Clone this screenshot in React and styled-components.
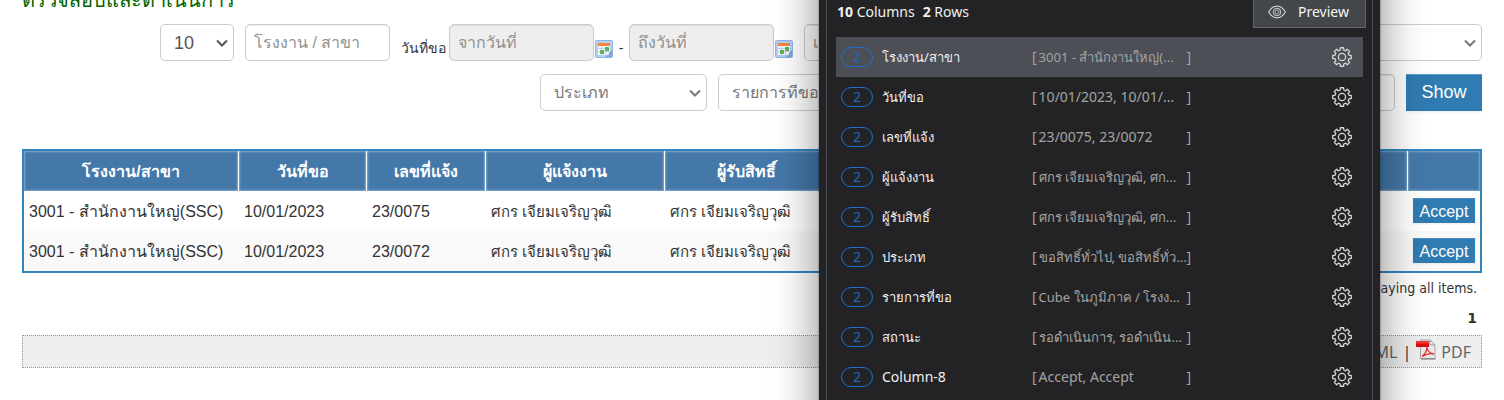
import React from "react";
import styled, { createGlobalStyle, css } from "styled-components";

const GlobalStyle = createGlobalStyle`
  * { box-sizing: border-box; }
  html, body { margin: 0; padding: 0; background: #fff; overflow-x: hidden; }
  body { font-family: "Liberation Sans", Arial, sans-serif; color: #333; }
  button, input, select { font-family: inherit; }
`;

const Page = styled.main`
  padding: 0 22px 32px;
`;

const Title = styled.h1`
  margin: -14px 0 10px;
  height: 28px;
  font-size: 20px;
  line-height: 28px;
  font-weight: 400;
  color: #006400;
`;

const FilterRow = styled.div`
  display: flex;
  justify-content: flex-end;
  gap: 11px;
  height: 37px;
  margin-bottom: 13px;
  padding-left: ${(p) => p.$indent}px;
`;

const field = css`
  height: 37px;
  border: 1px solid #ccc;
  border-radius: 5px;
  font-size: ${(p) => (p.$numeric ? 18 : 16)}px;
  color: #666;
  background-color: #fff;
  width: ${(p) => (p.$w ? `${p.$w}px` : "auto")};
  flex: ${(p) => (p.$grow ? "1 1 0" : "0 0 auto")};
  min-width: 0;
`;

const TextField = styled.input`
  ${field}
  padding: 0 8px;
  box-shadow: inset 0 1px 1px rgba(0, 0, 0, 0.08);
  &::placeholder { color: #909090; opacity: 1; }
  &:disabled { background-color: #eee; }
`;

const SelectWrap = styled.span`
  position: relative;
  display: flex;
  width: ${(p) => (p.$w ? `${p.$w}px` : "auto")};
  flex: ${(p) => (p.$grow ? "1 1 0" : "0 0 auto")};
  color: ${(p) => p.$tone || "#777"};
  svg {
    position: absolute;
    right: 6px;
    top: 13px;
    pointer-events: none;
  }
`;

const SelectField = styled.select`
  ${field}
  width: 100%;
  appearance: none;
  padding: 0 20px 0 13px;
  color: inherit;
`;

const DateGroup = styled.div`
  display: flex;
  align-items: flex-end;
  font-size: 14px;
`;

const DateLabel = styled.label`
  width: 48px;
  line-height: 20px;
  padding-bottom: 3px;
  white-space: nowrap;
`;

const Dash = styled.span`
  width: 16px;
  text-align: center;
  line-height: 20px;
  padding-bottom: 3px;
`;

const IconButton = styled.button`
  display: flex;
  padding: 0;
  border: 0;
  background: none;
  color: inherit;
  cursor: pointer;
`;

const CalendarButton = styled(IconButton)`
  margin: 0 0 3px 1px;
`;

const ShowButton = styled.button`
  width: 76px;
  height: 37px;
  border: 0;
  padding: 0;
  background: #307bb1;
  color: #fff;
  font-size: 18px;
  box-shadow: inset 0 2px 0 -1px #5c9ac6, 0 1px 2px rgba(0, 0, 0, 0.08);
`;

const Grid = styled.table`
  width: 100%;
  margin-top: 38px;
  table-layout: fixed;
  border-collapse: separate;
  border-spacing: 0;
  border: 2px solid #3385bf;
  font-size: 16px;
`;

const HeadCell = styled.th`
  height: 40px;
  padding: 2px 4px 0;
  background: #4478a9;
  color: #fff;
  font-size: 16px;
  line-height: 24px;
  border-right: 1px solid #fff;
  box-shadow: inset 0 0 2px 1px #82a7c8;
  white-space: nowrap;
  &:last-child { border-right: 0; }
`;

const Row = styled.tr`
  background: ${(p) => (p.$alt ? "#f9f9f9" : "#fff")};
`;

const Cell = styled.td`
  height: 40px;
  padding: 2px 5px 0;
  line-height: 24px;
  white-space: nowrap;
  overflow: hidden;
`;

const PersonCell = styled(Cell)`
  font-size: 15px;
`;

const ActionCell = styled(Cell)`
  padding: 0 5px 1px;
`;

const AcceptButton = styled.button`
  display: block;
  width: 62px;
  height: 25px;
  border: 0;
  padding: 2px 0 0;
  background: #307bb1;
  color: #fff;
  font-size: 16px;
  box-shadow: inset 0 2px 0 -1px #4a8dbd, 0 1px 2px rgba(0, 0, 0, 0.08);
`;

const Summary = styled.p`
  margin: 0;
  padding: 5px 5px 0;
  text-align: right;
  font-family: "DejaVu Sans Condensed", "DejaVu Sans", sans-serif;
  font-size: 14px;
  line-height: 20px;
`;

const Pager = styled.nav`
  padding: 10px 5px 0;
  text-align: right;
  font-family: "DejaVu Sans", sans-serif;
  font-size: 14px;
  line-height: 20px;
  font-weight: 700;
`;

const ExportBar = styled.div`
  display: flex;
  justify-content: flex-end;
  align-items: center;
  gap: 5px;
  height: 33px;
  margin-top: 7px;
  padding-right: 10px;
  border: 1px dotted #999;
  background: #eee;
  font-family: "Noto Sans", sans-serif;
  font-size: 16px;
`;

const ExportLink = styled.a`
  display: flex;
  align-items: center;
  gap: 5px;
  color: #666;
  text-decoration: none;
  svg { margin-bottom: 4px; }
`;

/* Column inspector floating over the page */
const Panel = styled.aside`
  position: fixed;
  top: -8px;
  bottom: 0;
  right: 124px;
  width: 561px;
  padding: 0 7px;
  overflow: hidden;
  background: #232325;
  color: #f0f0f0;
  font-family: "Noto Sans", "Open Sans", sans-serif;
  font-size: 14px;
`;

const PanelShadow = styled.div`
  position: fixed;
  top: -48px;
  bottom: -48px;
  right: 124px;
  width: 561px;
  box-shadow: 0 0 2px rgba(0, 0, 0, 0.5), 0 4px 40px 4px rgba(0, 0, 0, 0.4);
`;

const PanelBody = styled.div`
  height: 100%;
  padding: 0 9px;
  border: solid #4b4d54;
  border-width: 0 1px;
`;

const PanelHead = styled.header`
  display: flex;
  justify-content: space-between;
  height: 36px;
  margin-right: -3px;
  padding-left: 1px;
`;

const Counts = styled.p`
  display: flex;
  gap: 8px;
  margin: 0;
  padding-top: 10px;
  line-height: 20px;
  b { font-weight: 700; }
`;

const PreviewButton = styled.button`
  display: flex;
  align-items: center;
  gap: 12px;
  width: 113px;
  height: 36px;
  padding: 3px 14px 0;
  border: 1px solid #63666c;
  background: #43464b;
  color: #f5f5f5;
  font-size: 14px;
`;

const Columns = styled.ul`
  margin: 9px 0 0;
  padding: 0;
  list-style: none;
`;

const ColumnItem = styled.li`
  display: flex;
  align-items: center;
  height: 40px;
  padding: 0 11px 0 5px;
  line-height: 20px;
  white-space: nowrap;
  background: ${(p) => (p.$active ? "#4c4f56" : "transparent")};
`;

const Badge = styled.span`
  width: 32px;
  height: 20px;
  margin-right: 9px;
  border: 1px solid #1b72cc;
  border-radius: 10px;
  color: #1c66b8;
  line-height: 18px;
  text-align: center;
`;

const ColumnName = styled.span`
  width: 150px;
  font-size: ${(p) => (p.$thai ? 13 : 14)}px;
`;

const Sample = styled.span`
  display: flex;
  gap: 2px;
  color: #a3a3a3;
`;

const SampleText = styled.span`
  width: 146px;
  font-size: ${(p) => (p.$thai ? 13 : 14)}px;
`;

const GearButton = styled(IconButton)`
  margin-left: auto;
  color: #d4d4d4;
`;

const Chevron = () => (
  <svg width="12" height="12" viewBox="0 0 12 12" fill="none" stroke="currentColor" strokeWidth="2">
    <path d="M1 3.5 L6 8.5 L11 3.5" />
  </svg>
);

const CalendarIcon = () => (
  <svg width="18" height="18" viewBox="0 0 18 18">
    <rect x="0.5" y="0.5" width="17" height="17" rx="1" fill="#b4cff2" stroke="#8fb3e3" />
    <rect x="3" y="3" width="12" height="12" fill="#f4f8fd" />
    <rect x="3" y="3" width="12" height="3" fill="#f58442" />
    <path d="M3 8.5h12M3 11.5h12M6.5 7v8M10.500 7v8" stroke="#c2d3ea" />
    <rect x="5" y="10" width="4" height="4" fill="#5cb35c" />
    <rect x="10" y="7" width="4" height="4" fill="#5cb35c" />
    <path d="M17 10v7h-6.500c1-2 2-2 3-1.500c0-2 1-4 3.500-5.500z" fill="#7fa7dd" />
  </svg>
);

const PdfIcon = () => (
  <svg width="20" height="21" viewBox="0 0 20 21">
    <path d="M4.500 1h9.500l5 5v13.500h-14.500z" fill="#e9e9e9" stroke="#a5a5a5" />
    <path d="M14 1v5h5z" fill="#fff" stroke="#8d8d8d" />
    <path d="M5 20h14.500" stroke="#777" />
    <rect x="0" y="2" width="13" height="6" fill="#d90f0f" />
    <path d="M0 2h13v2.500h-13z" fill="#f03a3a" />
    <path d="M6 17.500c3-2.500 5-6 5-9.500c.5 4 3 6.500 7 7c-4-.8-8 0-12 2.500z" fill="none" stroke="#e5322d" strokeWidth="1.300" />
  </svg>
);

const EyeIcon = () => (
  <svg width="18" height="14" viewBox="0 0 18 14" fill="none" stroke="#cfcfcf" strokeWidth="1.200">
    <path d="M.7 7C2.800 3.200 5.700 1.200 9 1.200S15.200 3.200 17.300 7C15.200 10.800 12.300 12.800 9 12.800S2.800 10.800.7 7z" />
    <circle cx="9" cy="7" r="3.800" strokeWidth="1" />
    <circle cx="9" cy="7" r="2" strokeWidth="0.800" />
  </svg>
);

const gearPath = (() => {
  const points = [];
  for (let i = 0; i < 8; i += 1) {
    const centre = (i * Math.PI) / 4;
    [[-0.24, 7.2], [-0.18, 9.4], [0.18, 9.4], [0.24, 7.2]].forEach(([offset, radius]) => {
      const angle = centre + offset;
      points.push(`${(10 + radius * Math.sin(angle)).toFixed(2)} ${(10 - radius * Math.cos(angle)).toFixed(2)}`);
    });
  }
  return `M${points.join("L")}Z`;
})();

const GearIcon = () => (
  <svg width="20" height="20" viewBox="0 0 20 20" fill="none" stroke="currentColor" strokeWidth="1.300" strokeLinejoin="round">
    <path d={gearPath} />
    <circle cx="10" cy="10" r="3.600" />
  </svg>
);

const Select = ({ label, value, numeric, ...rest }) => (
  <SelectWrap {...rest}>
    <SelectField aria-label={label} defaultValue={value} $numeric={numeric}>
      <option>{value}</option>
    </SelectField>
    <Chevron />
  </SelectWrap>
);

const isThai = (text) => /[\u0E00-\u0E7F]/.test(text);

const headings = ["โรงงาน/สาขา", "วันที่ขอ", "เลขที่แจ้ง", "ผู้แจ้งงาน", "ผู้รับสิทธิ์", "ประเภท", "รายการที่ขอ", "สถานะ", ""];
const widths = [215, 128, 119, 179, 164, null, null, null, 72];
const person = "ศกร เจียมเจริญวุฒิ";
const requests = ["23/0075", "23/0072"];

const inspected = [
  ["โรงงาน/สาขา", "3001 - สำนักงานใหญ่(..."],
  ["วันที่ขอ", "10/01/2023, 10/01/..."],
  ["เลขที่แจ้ง", "23/0075, 23/0072"],
  ["ผู้แจ้งงาน", "ศกร เจียมเจริญวุฒิ, ศก..."],
  ["ผู้รับสิทธิ์", "ศกร เจียมเจริญวุฒิ, ศก..."],
  ["ประเภท", "ขอสิทธิ์ทั่วไป, ขอสิทธิ์ทั่ว..."],
  ["รายการที่ขอ", "Cube ในภูมิภาค / โรงง..."],
  ["สถานะ", "รอดำเนินการ, รอดำเนิน..."],
  ["Column-8", "Accept, Accept"],
];

export default function App() {
  return (
    <>
      <GlobalStyle />
      <Page>
        <Title>ตรวจสอบและดำเนินการ</Title>
        <FilterRow $indent={138}>
          <Select label="10" value="10" numeric $w={74} $tone="#555" />
          <TextField $w={145} placeholder="โรงงาน / สาขา" aria-label="โรงงาน / สาขา" />
          <DateGroup>
            <DateLabel htmlFor="from">วันที่ขอ</DateLabel>
            <TextField id="from" $w={145} placeholder="จากวันที่" disabled />
            <CalendarButton aria-label="จากวันที่"><CalendarIcon /></CalendarButton>
            <Dash>-</Dash>
            <TextField $w={145} placeholder="ถึงวันที่" aria-label="ถึงวันที่" disabled />
            <CalendarButton aria-label="ถึงวันที่"><CalendarIcon /></CalendarButton>
          </DateGroup>
          <TextField $w={145} placeholder="เลขที่แจ้ง" aria-label="เลขที่แจ้ง" />
          <Select label="สถานะ" value="สถานะ" $grow />
        </FilterRow>
        <FilterRow $indent={518}>
          <Select label="ประเภท" value="ประเภท" $w={167} />
          <Select label="รายการที่ขอ" value="รายการที่ขอ" $w={240} />
          <TextField $grow aria-label="รายการที่ขอ" />
          <ShowButton>Show</ShowButton>
        </FilterRow>

        <Grid>
          <colgroup>
            {widths.map((w, i) => <col key={i} width={w || undefined} />)}
          </colgroup>
          <thead>
            <tr>{headings.map((h, i) => <HeadCell key={i}>{h}</HeadCell>)}</tr>
          </thead>
          <tbody>
            {requests.map((no, i) => (
              <Row key={no} $alt={i % 2 === 1}>
                <Cell>3001 - สำนักงานใหญ่(SSC)</Cell>
                <Cell>10/01/2023</Cell>
                <Cell>{no}</Cell>
                <PersonCell>{person}</PersonCell>
                <PersonCell>{person}</PersonCell>
                <Cell />
                <Cell />
                <Cell />
                <ActionCell><AcceptButton>Accept</AcceptButton></ActionCell>
              </Row>
            ))}
          </tbody>
        </Grid>

        <Summary>Displaying all items.</Summary>
        <Pager>1</Pager>
        <ExportBar>
          <ExportLink href="#xml">XML</ExportLink>
          <span>|</span>
          <ExportLink href="#pdf"><PdfIcon />PDF</ExportLink>
        </ExportBar>
      </Page>

      <PanelShadow />
      <Panel>
        <PanelBody>
          <PanelHead>
            <Counts>
              <span><b>10</b> Columns</span>
              <span><b>2</b> Rows</span>
            </Counts>
            <PreviewButton><EyeIcon />Preview</PreviewButton>
          </PanelHead>
          <Columns>
            {inspected.map(([name, sample], i) => (
              <ColumnItem key={name} $active={i === 0}>
                <Badge>2</Badge>
                <ColumnName $thai={isThai(name)}>{name}</ColumnName>
                <Sample>
                  <span>[</span>
                  <SampleText $thai={isThai(sample)}>{sample}</SampleText>
                  <span>]</span>
                </Sample>
                <GearButton aria-label={name}><GearIcon /></GearButton>
              </ColumnItem>
            ))}
          </Columns>
        </PanelBody>
      </Panel>
    </>
  );
}
